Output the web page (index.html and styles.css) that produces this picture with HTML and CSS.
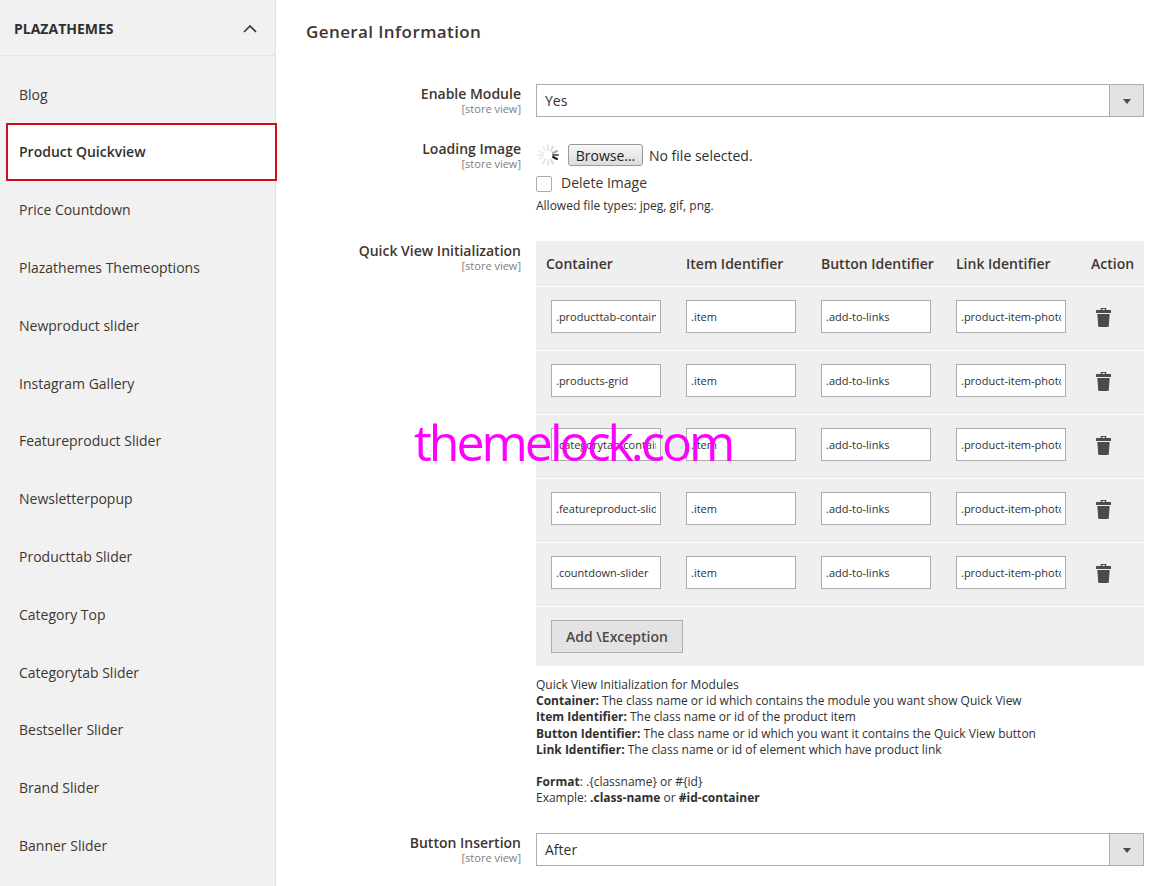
FILE: index.html
```html
<!DOCTYPE html>
<html lang="en">
<head>
  <meta charset="UTF-8" />
  <title>Configuration</title>
  <meta name="viewport" content="width=device-width, initial-scale=1.0" />
  <link rel="stylesheet" href="styles.css">
</head>
<body>
  <aside class="sidebar">
    <div class="sidebar-head">
      <span>PLAZATHEMES</span>
      <svg class="chevron" width="14" height="8" viewBox="0 0 14 8"><path d="M1 7l6-6 6 6" fill="none" stroke="#333" stroke-width="1.6"/></svg>
    </div>
    <ul class="side-nav">
      <li>Blog</li>
      <li class="active">Product Quickview</li>
      <li>Price Countdown</li>
      <li>Plazathemes Themeoptions</li>
      <li>Newproduct slider</li>
      <li>Instagram Gallery</li>
      <li>Featureproduct Slider</li>
      <li>Newsletterpopup</li>
      <li>Producttab Slider</li>
      <li>Category Top</li>
      <li>Categorytab Slider</li>
      <li>Bestseller Slider</li>
      <li>Brand Slider</li>
      <li>Banner Slider</li>
    </ul>
  </aside>

  <main class="content">
    <h2>General Information</h2>

    <div class="field field-module">
      <div class="field-label">Enable Module<small>[store view]</small></div>
      <div class="field-control">
        <div class="select"><span>Yes</span><i class="select-arrow"></i></div>
      </div>
    </div>

    <div class="field field-image">
      <div class="field-label">Loading Image<small>[store view]</small></div>
      <div class="field-control">
        <div class="file-row">
          <svg class="spinner" width="24" height="24" viewBox="0 0 24 24" fill="none" stroke-width="2" stroke-linecap="round">
            <path d="M12 2v5" stroke="#e4e4e4"/>
            <path d="M17 3.500l-2 4" stroke="#dcdcdc"/>
            <path d="M21 8l-4 2" stroke="#aaa"/>
            <path d="M22 12h-5" stroke="#666"/>
            <path d="M21 16l-4-2" stroke="#222"/>
            <path d="M17 20.500l-2-4" stroke="#ddd"/>
            <path d="M7 3.500l2 4" stroke="#eee"/>
            <path d="M3 8l4 2" stroke="#eee"/>
            <path d="M2 12h5" stroke="#eee"/>
            <path d="M3 16l4-2" stroke="#eee"/>
            <path d="M7 20.500l2-4" stroke="#e8e8e8"/>
            <path d="M12 22v-5" stroke="#e8e8e8"/>
          </svg>
          <button class="browse" type="button">Browse...</button>
          <span>No file selected.</span>
        </div>
        <label class="check-row"><input type="checkbox"> Delete Image</label>
        <div class="file-note">Allowed file types: jpeg, gif, png.</div>
      </div>
    </div>

    <div class="field field-table">
      <div class="field-label">Quick View Initialization<small>[store view]</small></div>
      <div class="field-control">
        <div class="grid-table">
          <div class="grid-row grid-head">
            <div class="col-first">Container</div>
            <div>Item Identifier</div>
            <div>Button Identifier</div>
            <div>Link Identifier</div>
            <div>Action</div>
          </div>
          <div class="grid-row">
            <div class="col-first"><input type="text" value=".producttab-container"></div>
            <div><input type="text" value=".item"></div>
            <div><input type="text" value=".add-to-links"></div>
            <div><input type="text" value=".product-item-photo"></div>
            <div><svg class="trash" viewBox="0 0 16 20" preserveAspectRatio="none"><path d="M5 3V1h6v2h4.500a.5.5 0 0 1 .5.500V6H0V3.500A.5.5 0 0 1 .5 3zM6.500 2v1h3V2zM1.400 7h13.200l-1 12a1 1 0 0 1-1 1H3.400a1 1 0 0 1-1-1z" fill="#514943" fill-rule="evenodd"/></svg></div>
          </div>
          <div class="grid-row">
            <div class="col-first"><input type="text" value=".products-grid"></div>
            <div><input type="text" value=".item"></div>
            <div><input type="text" value=".add-to-links"></div>
            <div><input type="text" value=".product-item-photo"></div>
            <div><svg class="trash" viewBox="0 0 16 20" preserveAspectRatio="none"><path d="M5 3V1h6v2h4.500a.5.5 0 0 1 .5.500V6H0V3.500A.5.5 0 0 1 .5 3zM6.500 2v1h3V2zM1.400 7h13.200l-1 12a1 1 0 0 1-1 1H3.400a1 1 0 0 1-1-1z" fill="#514943" fill-rule="evenodd"/></svg></div>
          </div>
          <div class="grid-row">
            <div class="col-first"><input type="text" value=".categorytab-container"></div>
            <div><input type="text" value=".item"></div>
            <div><input type="text" value=".add-to-links"></div>
            <div><input type="text" value=".product-item-photo"></div>
            <div><svg class="trash" viewBox="0 0 16 20" preserveAspectRatio="none"><path d="M5 3V1h6v2h4.500a.5.5 0 0 1 .5.500V6H0V3.500A.5.5 0 0 1 .5 3zM6.500 2v1h3V2zM1.400 7h13.200l-1 12a1 1 0 0 1-1 1H3.400a1 1 0 0 1-1-1z" fill="#514943" fill-rule="evenodd"/></svg></div>
          </div>
          <div class="grid-row">
            <div class="col-first"><input type="text" value=".featureproduct-slider"></div>
            <div><input type="text" value=".item"></div>
            <div><input type="text" value=".add-to-links"></div>
            <div><input type="text" value=".product-item-photo"></div>
            <div><svg class="trash" viewBox="0 0 16 20" preserveAspectRatio="none"><path d="M5 3V1h6v2h4.500a.5.5 0 0 1 .5.500V6H0V3.500A.5.5 0 0 1 .5 3zM6.500 2v1h3V2zM1.400 7h13.200l-1 12a1 1 0 0 1-1 1H3.400a1 1 0 0 1-1-1z" fill="#514943" fill-rule="evenodd"/></svg></div>
          </div>
          <div class="grid-row">
            <div class="col-first"><input type="text" value=".countdown-slider"></div>
            <div><input type="text" value=".item"></div>
            <div><input type="text" value=".add-to-links"></div>
            <div><input type="text" value=".product-item-photo"></div>
            <div><svg class="trash" viewBox="0 0 16 20" preserveAspectRatio="none"><path d="M5 3V1h6v2h4.500a.5.5 0 0 1 .5.500V6H0V3.500A.5.5 0 0 1 .5 3zM6.500 2v1h3V2zM1.400 7h13.200l-1 12a1 1 0 0 1-1 1H3.400a1 1 0 0 1-1-1z" fill="#514943" fill-rule="evenodd"/></svg></div>
          </div>
          <div class="grid-foot">
            <button class="add-btn" type="button">Add \Exception</button>
          </div>
        </div>

        <div class="note">
          <p>
            Quick View Initialization for Modules<br>
            <b>Container:</b> The class name or id which contains the module you want show Quick View<br>
            <b>Item Identifier:</b> The class name or id of the product item<br>
            <b>Button Identifier:</b> The class name or id which you want it contains the Quick View button<br>
            <b>Link Identifier:</b> The class name or id of element which have product link
          </p>
          <p>
            <b>Format</b>: .{classname} or #{id}<br>
            Example: <b>.class-name</b> or <b>#id-container</b>
          </p>
        </div>
      </div>
    </div>

    <div class="field field-insert">
      <div class="field-label">Button Insertion<small>[store view]</small></div>
      <div class="field-control">
        <div class="select"><span>After</span><i class="select-arrow"></i></div>
      </div>
    </div>
  </main>

  <div class="watermark">themelock.com</div>
</body>
</html>
```

FILE: styles.css
```css
* {
  box-sizing: border-box;
}

html, body {
  margin: 0;
  padding: 0;
  height: 100%;
  overflow: hidden;
}

body {
  font-family: 'Open Sans', sans-serif;
  font-size: 14px;
  color: #303030;
  background: white;
  display: flex;
  position: relative;
}

.sidebar {
  width: 276px;
  flex-shrink: 0;
  background: #f1f1f1;
  border-right: 1px solid #e3e3e3;
}

.sidebar-head {
  height: 56px;
  padding: 2px 18px 0 14px;
  display: flex;
  justify-content: space-between;
  align-items: center;
  font-weight: 700;
  font-size: 14px;
  border-bottom: 1px solid #e3e3e3;
}

.side-nav {
  list-style: none;
  margin: 0;
  padding: 9.3px 0 0;
}

.side-nav li {
  height: 57.8px;
  padding-left: 19px;
  display: flex;
  align-items: center;
  font-size: 14px;
  color: #41362f;
}

.side-nav li.active {
  height: 58.3px;
  margin: -0.5px -2px 0 6px;
  padding: 0 0 1px 11px;
  background: white;
  border: 2px solid #cc0f1a;
  font-weight: 600;
  color: #303030;
}

.content {
  flex: 1;
  padding: 22px 9px 0 30px;
}

h2 {
  margin: 0;
  font-size: 17px;
  line-height: 20px;
  font-weight: 600;
  letter-spacing: 0.4px;
  color: #41362f;
}

.field {
  display: flex;
  align-items: flex-start;
}

.field-module { margin-top: 42px; }
.field-image { margin-top: 23px; }
.field-table { margin-top: 27px; }
.field-insert { margin-top: 27px; }

.field-label {
  width: 215px;
  flex-shrink: 0;
  text-align: right;
  font-weight: 600;
  font-size: 14px;
  line-height: 18px;
  color: #41362f;
}

.field-module .field-label,
.field-table .field-label,
.field-insert .field-label {
  padding-top: 1px;
}

.field-label small {
  display: block;
  font-weight: 400;
  font-size: 11px;
  line-height: 11px;
  color: #808080;
}

.field-control {
  margin-left: 15px;
  flex: 1;
  min-width: 0;
}

.select {
  height: 33px;
  padding-left: 8px;
  display: flex;
  align-items: center;
  justify-content: space-between;
  border: 1px solid #adadad;
  background: white;
  font-size: 14px;
}

.select-arrow {
  width: 34px;
  height: 31px;
  position: relative;
  background: #e3e3e3;
  border-left: 1px solid #adadad;
}

.select-arrow::after {
  content: "";
  position: absolute;
  left: 13px;
  top: 14px;
  border-left: 4px solid transparent;
  border-right: 4px solid transparent;
  border-top: 5px solid #514943;
}

.file-row {
  display: flex;
  align-items: center;
  height: 24px;
  margin-top: 3px;
  font-size: 14px;
}

.spinner {
  margin-right: 8px;
}

.browse {
  height: 22px;
  width: 75px;
  padding: 0;
  margin-right: 6px;
  font-family: inherit;
  font-size: 14px;
  color: #222;
  background: linear-gradient(#f6f6f6, #dcdcdc);
  border: 1px solid #9a9a9a;
  border-radius: 3px;
}

.check-row {
  display: flex;
  align-items: center;
  margin-top: 5px;
  height: 20px;
  font-size: 14px;
  color: #41362f;
}

.check-row input {
  appearance: none;
  width: 16px;
  height: 16px;
  margin: 4px 9px 0 0;
  background: white;
  border: 1px solid #adadad;
  border-radius: 2px;
}

.file-note {
  margin-top: 5px;
  font-size: 12px;
  line-height: 17px;
}

.grid-table {
  background: #efefef;
}

.grid-row {
  display: grid;
  grid-template-columns: 150px 135px 135px 135px 1fr;
  align-items: center;
  height: 64px;
  padding: 13px 0 17px;
  border-top: 1px solid white;
}

.grid-head {
  height: 45px;
  padding: 0;
  border-top: 0;
  font-weight: 600;
  font-size: 14px;
  color: #41362f;
}

.grid-row .col-first {
  padding-left: 15px;
}

.grid-head .col-first {
  padding-left: 10px;
}

.grid-row input {
  display: block;
  width: 110px;
  height: 33px;
  padding: 0 4px;
  font-family: inherit;
  font-size: 11px;
  color: #303030;
  background: white;
  border: 1px solid #adadad;
  border-radius: 0;
}

.trash {
  display: block;
  width: 15px;
  height: 20px;
  margin-left: 5px;
}

.grid-foot {
  height: 60px;
  padding: 13px 15px 0;
  border-top: 1px solid white;
}

.add-btn {
  width: 132px;
  height: 33px;
  padding: 0;
  font-family: inherit;
  font-weight: 600;
  font-size: 14px;
  color: #514943;
  background: #e3e3e3;
  border: 1px solid #adadad;
}

.note {
  margin-top: 11px;
  font-size: 12px;
  line-height: 16.2px;
  color: #303030;
}

.note p {
  margin: 0;
}

.note p + p {
  margin-top: 16px;
}

.watermark {
  position: absolute;
  left: 414px;
  top: 408px;
  font-size: 50px;
  line-height: 68px;
  letter-spacing: -3px;
  color: #ff00ff;
  pointer-events: none;
}
```
